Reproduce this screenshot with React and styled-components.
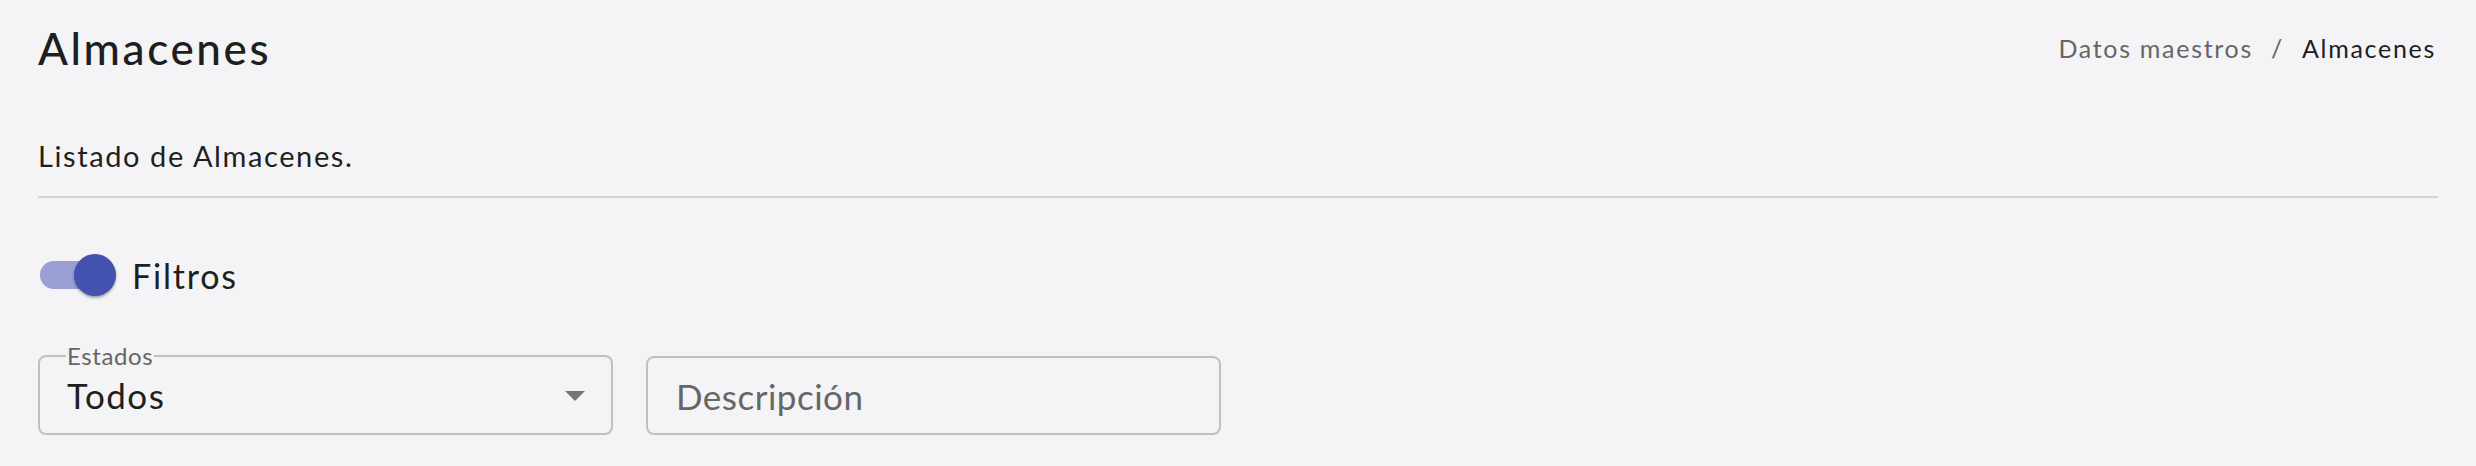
import React from 'react';
import styled, { createGlobalStyle } from 'styled-components';

const GlobalStyle = createGlobalStyle`
  html, body {
    margin: 0;
    padding: 0;
    background: #f4f4f6;
    font-family: 'Lato', 'Noto Sans', sans-serif;
    color: #1f1f1f;
  }
`;

const Page = styled.div`
  padding: 14px 38px 0 38px;
  min-height: 466px;
  box-sizing: border-box;
`;

const Header = styled.div`
  display: flex;
  align-items: center;
  justify-content: space-between;
  height: 68px;
`;

const Title = styled.h1`
  margin: 0;
  font-size: 44px;
  font-weight: 500;
  letter-spacing: 2.6px;
  color: #1e1e1e;
`;

const Crumbs = styled.nav`
  display: flex;
  align-items: center;
  gap: 18px;
  font-size: 25px;
  letter-spacing: 1.7px;
  margin-right: 2px;
`;

const Crumb = styled.span`
  color: ${p => (p.active ? '#1e1e1e' : '#666666')};
`;

const Sep = styled.span`
  color: #666666;
`;

const Description = styled.p`
  margin: 56px 0 0 0;
  font-size: 29px;
  letter-spacing: 1.6px;
  line-height: 36px;
`;

const Divider = styled.hr`
  margin: 22px 0 0 0;
  border: none;
  height: 2px;
  background: #d2d2d4;
`;

const FilterToggle = styled.label`
  display: flex;
  align-items: center;
  gap: 16px;
  margin-top: 56px;
  font-size: 34px;
  letter-spacing: 1.8px;
`;

const Switch = styled.span`
  position: relative;
  display: inline-block;
  width: 76px;
  height: 42px;
  margin-left: 2px;
`;

const Track = styled.span`
  position: absolute;
  left: 0;
  top: 7px;
  width: 68px;
  height: 28px;
  border-radius: 14px;
  background: #9aa0d4;
`;

const Thumb = styled.span`
  position: absolute;
  left: 34px;
  top: 0;
  width: 42px;
  height: 42px;
  border-radius: 50%;
  background: #4351af;
  box-shadow: 0 2px 3px rgba(0, 0, 0, 0.25), 0 1px 2px rgba(0, 0, 0, 0.15);
`;

const Fields = styled.div`
  display: flex;
  gap: 33px;
  margin-top: 48px;
`;

const Outline = styled.fieldset`
  position: relative;
  box-sizing: border-box;
  width: 575px;
  height: 91px;
  margin: 0;
  padding: 0 26px 0 27px;
  border: 2px solid #c0c0c3;
  border-radius: 8px;
  display: flex;
  align-items: center;
  justify-content: space-between;
`;

const Legend = styled.legend`
  padding: 0 1px;
  margin-left: -1px;
  font-size: 24px;
  line-height: 24px;
  color: #666666;
  letter-spacing: 0.6px;
`;

const Value = styled.span`
  font-size: 35px;
  margin-top: ${p => (p.placeholder ? '0' : '-11px')};
  color: ${p => (p.placeholder ? '#666666' : '#1e1e1e')};
  letter-spacing: ${p => (p.placeholder ? '0.5px' : '1.5px')};
`;

const Caret = styled.span`
  width: 0;
  height: 0;
  margin-top: -10px;
  border-left: 10px solid transparent;
  border-right: 10px solid transparent;
  border-top: 10px solid #757575;
`;

const TextBox = styled.div`
  box-sizing: border-box;
  width: 575px;
  height: 79px;
  margin-top: 12px;
  padding: 0 28px;
  border: 2px solid #c0c0c3;
  border-radius: 8px;
  display: flex;
  align-items: center;
`;

export default function App() {
  return (
    <>
      <GlobalStyle />
      <Page>
        <Header>
          <Title>Almacenes</Title>
          <Crumbs>
            <Crumb>Datos maestros</Crumb>
            <Sep>/</Sep>
            <Crumb active>Almacenes</Crumb>
          </Crumbs>
        </Header>
        <Description>Listado de Almacenes.</Description>
        <Divider />
        <FilterToggle>
          <Switch>
            <Track />
            <Thumb />
          </Switch>
          Filtros
        </FilterToggle>
        <Fields>
          <Outline>
            <Legend>Estados</Legend>
            <Value>Todos</Value>
            <Caret />
          </Outline>
          <TextBox>
            <Value placeholder>Descripción</Value>
          </TextBox>
        </Fields>
      </Page>
    </>
  );
}
